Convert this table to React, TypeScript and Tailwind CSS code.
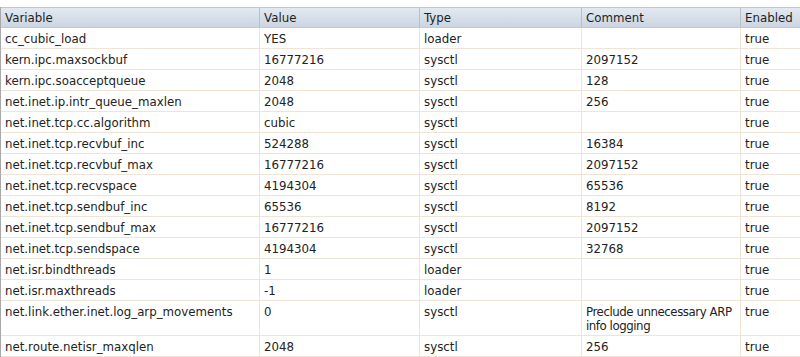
const rows: [string, string, string, string, string][] = [
  ["cc_cubic_load", "YES", "loader", "", "true"],
  ["kern.ipc.maxsockbuf", "16777216", "sysctl", "2097152", "true"],
  ["kern.ipc.soacceptqueue", "2048", "sysctl", "128", "true"],
  ["net.inet.ip.intr_queue_maxlen", "2048", "sysctl", "256", "true"],
  ["net.inet.tcp.cc.algorithm", "cubic", "sysctl", "", "true"],
  ["net.inet.tcp.recvbuf_inc", "524288", "sysctl", "16384", "true"],
  ["net.inet.tcp.recvbuf_max", "16777216", "sysctl", "2097152", "true"],
  ["net.inet.tcp.recvspace", "4194304", "sysctl", "65536", "true"],
  ["net.inet.tcp.sendbuf_inc", "65536", "sysctl", "8192", "true"],
  ["net.inet.tcp.sendbuf_max", "16777216", "sysctl", "2097152", "true"],
  ["net.inet.tcp.sendspace", "4194304", "sysctl", "32768", "true"],
  ["net.isr.bindthreads", "1", "loader", "", "true"],
  ["net.isr.maxthreads", "-1", "loader", "", "true"],
  ["net.link.ether.inet.log_arp_movements", "0", "sysctl", "Preclude unnecessary ARP\ninfo logging", "true"],
  ["net.route.netisr_maxqlen", "2048", "sysctl", "256", "true"],
];

const cols = "grid grid-cols-[258px_160px_162px_159px_1fr]";

export default function App() {
  return (
    <div className="h-[357px] w-[800px] overflow-hidden bg-white pt-[7px] text-[11.8px] leading-[14px] text-[#222]" style={{ fontFamily: '"DejaVu Sans", Verdana, sans-serif' }}>
      <div className="border-l border-[#a8a8a8]">
        {/* cabecera */}
        <div className={`${cols} h-[21px] border-y border-[#c4c8ce] bg-gradient-to-b from-[#e3e9f1] to-[#cbd5e1] text-[#1e1e1e]`}>
          {["Variable", "Value", "Type", "Comment", "Enabled"].map((h, i) => (
            <div key={h} className={`flex items-center px-[4px] ${i > 0 ? "border-l border-[#b9c0c9]" : ""}`}>
              {h}
            </div>
          ))}
        </div>
        {/* filas */}
        {rows.map((r) => (
          <div key={r[0]} className={`${cols} border-b border-[#f1e3d6]`}>
            {r.map((c, i) => (
              <div
                key={i}
                className={`min-h-[20px] whitespace-pre px-[4px] pt-[4px] pb-[2px] ${i > 0 ? "border-l border-[#f1e3d6]" : ""} ${c.includes("\n") ? "tracking-[-0.45px]" : ""}`}
              >
                {c}
              </div>
            ))}
          </div>
        ))}
      </div>
    </div>
  );
}
